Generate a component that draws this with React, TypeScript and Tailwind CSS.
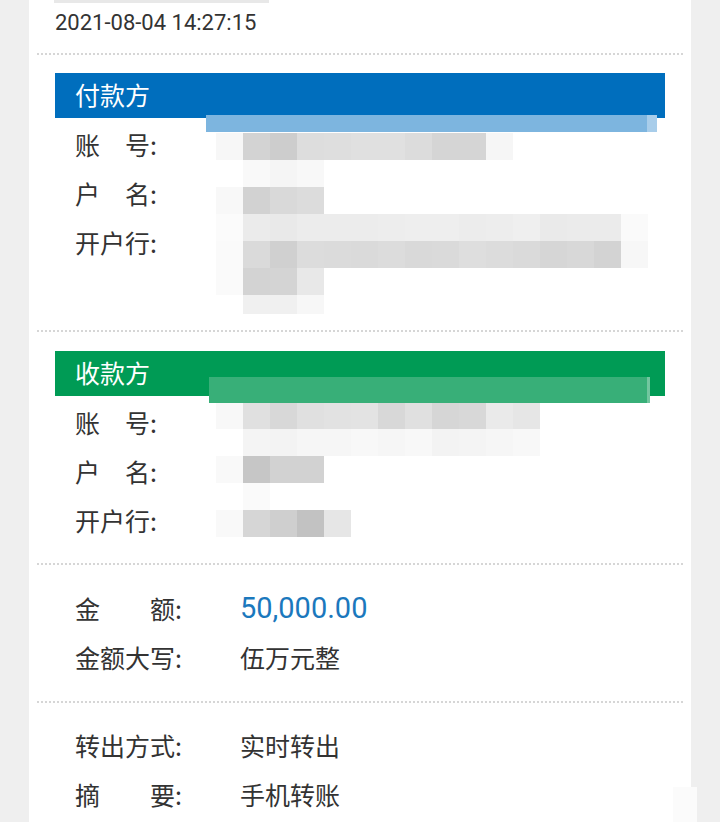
type Cells = { h: number; c: string[] };

const payerMosaic: Cells[] = [
  { h: 27, c: ["#f7f7f7", "#d3d3d3", "#cdcdcd", "#dddddd", "#dedede", "#e0e0e0", "#e0e0e0", "#dcdcdc", "#d5d5d5", "#d5d5d5", "#f6f6f6"] },
  { h: 27, c: ["#ffffff", "#f9f9f9", "#f5f5f5", "#f8f8f8"] },
  { h: 27, c: ["#f8f8f8", "#d2d2d2", "#d9d9d9", "#dcdcdc"] },
  { h: 27, c: ["#fbfbfb", "#ebebeb", "#e9e9e9", "#ececec", "#ececec", "#ececec", "#ededed", "#eeeeee", "#eeeeee", "#ececec", "#ededed", "#efefef", "#eaeaea", "#ebebeb", "#ebebeb", "#fafafa"] },
  { h: 27, c: ["#fafafa", "#dadada", "#d0d0d0", "#dcdcdc", "#dbdbdb", "#dadada", "#dcdcdc", "#d9d9d9", "#dadada", "#dedede", "#dcdcdc", "#dadada", "#d6d6d6", "#d8d8d8", "#d3d3d3", "#f7f7f7"] },
  { h: 27, c: ["#fafafa", "#d3d3d3", "#d4d4d4", "#e8e8e8"] },
  { h: 19, c: ["#ffffff", "#f0f0f0", "#f0f0f0", "#f7f7f7"] },
];

const payeeMosaic: Cells[] = [
  { h: 26, c: ["#f8f8f8", "#e0e0e0", "#d8d8d8", "#e0e0e0", "#e2e2e2", "#e3e3e3", "#d8d8d8", "#e0e0e0", "#d6d6d6", "#d8d8d8", "#eaeaea", "#e6e6e6"] },
  { h: 27, c: ["#ffffff", "#f4f4f4", "#f3f3f3", "#f6f6f6", "#f6f6f6", "#f8f8f8", "#f6f6f6", "#f8f8f8", "#f3f3f3", "#f4f4f4", "#f6f6f6", "#f8f8f8"] },
  { h: 27, c: ["#f9f9f9", "#c6c6c6", "#d2d2d2", "#d2d2d2"] },
  { h: 27, c: ["#ffffff", "#fafafa"] },
  { h: 27, c: ["#f9f9f9", "#d6d6d6", "#cfcfcf", "#c2c2c2", "#e6e6e6"] },
];

const cjk = "font-['Noto_Sans_CJK_SC',sans-serif]";

function Label({ chars, wide }: { chars: string[]; wide?: boolean }) {
  return (
    <div className="flex items-center">
      <div className={`flex justify-between ${wide ? "w-[100px]" : "w-[75px]"}`}>
        {chars.map((ch, i) => (
          <span key={i}>{ch}</span>
        ))}
      </div>
      <span>:</span>
    </div>
  );
}

function Mosaic({ rows }: { rows: Cells[] }) {
  return (
    <div className="flex flex-col">
      {rows.map((row, i) => (
        <div key={i} className="flex">
          {row.c.map((color, j) => (
            <div key={j} className="w-[27px] shrink-0" style={{ height: row.h, background: color }} />
          ))}
        </div>
      ))}
    </div>
  );
}

function Divider() {
  return <div className="border-t-2 border-dotted border-[#d6d6d6]" />;
}

const partyLabels = [["账", "号"], ["户", "名"], ["开", "户", "行"]];

export default function App() {
  return (
    <div className={`relative min-h-screen overflow-hidden bg-[#efefef] text-[#333] ${cjk}`}>
      <div className="ml-[29px] w-[662px] bg-white px-2">
        <div className="ml-[17px] h-[3px] w-[215px] bg-[#e8e8e8]" />
        <div className="mb-[11px] flex h-[39px] items-center pl-[18px] font-['Roboto',sans-serif] text-[22px] text-[#333]">
          2021-08-04 14:27:15
        </div>
        <Divider />

        {/* 付款方 */}
        <section className="px-[18px] pt-[18px] pb-[16px]">
          <div className="relative flex h-[45px] items-center bg-[#006ebd] pb-[2px] pl-5 text-[25px] text-white">
            付款方
            <div className="absolute left-[151px] top-[42px] flex h-[17px] w-[451px]">
              <div className="flex-1 bg-[#7db5df]" />
              <div className="w-[10px] bg-[#a8cdea]" />
            </div>
          </div>
          <div className="flex items-start">
            <div className="w-[161px] shrink-0 pl-5 pt-[2px] text-[25px]">
              {partyLabels.map((l, i) => (
                <div key={i} className="flex h-[49px] items-center">
                  <Label chars={l} />
                </div>
              ))}
            </div>
            <div className="mt-[15px]">
              <Mosaic rows={payerMosaic} />
            </div>
          </div>
        </section>
        <Divider />

        {/* 收款方 */}
        <section className="px-[18px] pt-[19px] pb-[18px]">
          <div className="relative flex h-[45px] items-center bg-[#009b55] pb-[2px] pl-5 text-[25px] text-white">
            收款方
            <div className="absolute left-[154px] top-[26px] flex h-[26px] w-[441px]">
              <div className="flex-1 bg-[#38af78]" />
              <div className="w-[3px] bg-[#72c69f]" />
            </div>
          </div>
          <div className="flex items-start">
            <div className="w-[161px] shrink-0 pl-5 pt-[2px] text-[25px]">
              {partyLabels.map((l, i) => (
                <div key={i} className="flex h-[49px] items-center">
                  <Label chars={l} />
                </div>
              ))}
            </div>
            <div className="mt-[7px]">
              <Mosaic rows={payeeMosaic} />
            </div>
          </div>
        </section>
        <Divider />

        {/* 金额 */}
        <section className="pl-[38px] pt-[19px] pb-[19px] text-[25px]">
          <div className="flex h-[49px] items-center">
            <div className="w-[165px] shrink-0">
              <Label chars={["金", "额"]} wide />
            </div>
            <span className="font-['Roboto',sans-serif] text-[29px] text-[#1b78bd]">50,000.00</span>
          </div>
          <div className="flex h-[49px] items-center">
            <div className="w-[165px] shrink-0">
              <Label chars={["金", "额", "大", "写"]} wide />
            </div>
            <span>伍万元整</span>
          </div>
        </section>
        <Divider />

        <section className="pl-[38px] pt-[18px] pb-[10px] text-[25px]">
          <div className="flex h-[49px] items-center">
            <div className="w-[165px] shrink-0">
              <Label chars={["转", "出", "方", "式"]} wide />
            </div>
            <span>实时转出</span>
          </div>
          <div className="flex h-[49px] items-center">
            <div className="w-[165px] shrink-0">
              <Label chars={["摘", "要"]} wide />
            </div>
            <span>手机转账</span>
          </div>
        </section>
      </div>
      <div className="absolute left-[673px] top-[787px] h-[40px] w-[24px] bg-[#fbfbfb]" />
    </div>
  );
}
